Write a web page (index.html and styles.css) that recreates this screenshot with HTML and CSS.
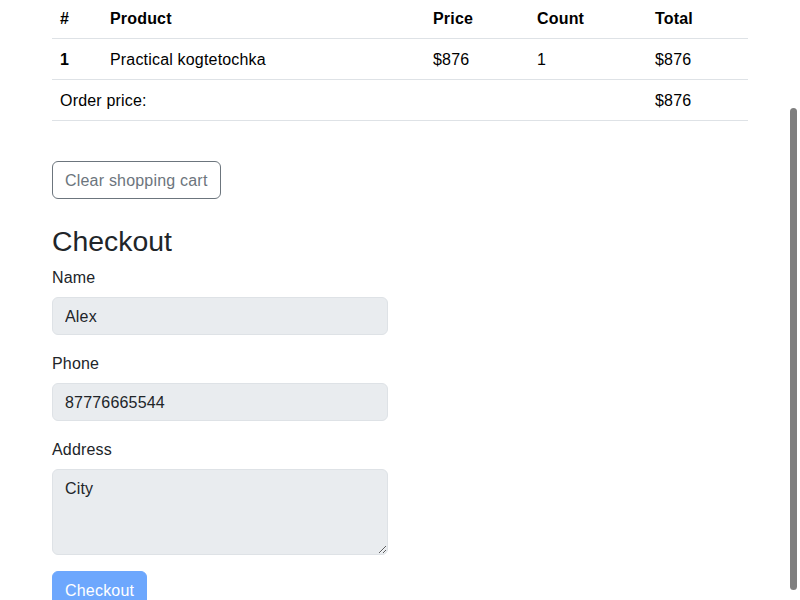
FILE: index.html
```html
<!DOCTYPE html>
<html lang="en">
<head>
<meta charset="utf-8">
<title>Cart</title>
<link rel="stylesheet" href="styles.css">
</head>
<body>
<div class="container">
  <table class="cart">
    <thead>
      <tr>
        <th class="c-num">#</th>
        <th class="c-prod">Product</th>
        <th class="c-price">Price</th>
        <th class="c-count">Count</th>
        <th class="c-total">Total</th>
      </tr>
    </thead>
    <tbody>
      <tr>
        <th>1</th>
        <td>Practical kogtetochka</td>
        <td>$876</td>
        <td>1</td>
        <td>$876</td>
      </tr>
      <tr>
        <td colspan="4">Order price:</td>
        <td>$876</td>
      </tr>
    </tbody>
  </table>

  <button class="btn btn-outline" type="button">Clear shopping cart</button>

  <h2 class="title">Checkout</h2>
  <form class="form">
    <div class="field">
      <label class="label" for="name">Name</label>
      <input class="control" id="name" type="text" value="Alex" readonly>
    </div>
    <div class="field">
      <label class="label" for="phone">Phone</label>
      <input class="control" id="phone" type="text" value="87776665544" readonly>
    </div>
    <div class="field">
      <label class="label" for="address">Address</label>
      <textarea class="control area" id="address" rows="3" readonly>City</textarea>
    </div>
    <button class="btn btn-primary" type="button" disabled>Checkout</button>
  </form>
</div>
<div class="scroll-thumb"></div>
</body>
</html>
```

FILE: styles.css
```css
* { box-sizing: border-box; }
html, body { margin: 0; padding: 0; background: #fff; }
body {
  font-family: "Liberation Sans", Arial, sans-serif;
  font-size: 16px;
  line-height: 24px;
  letter-spacing: 0.18px;
  color: #212529;
  overflow: hidden;
}
.container {
  width: 720px;
  margin: 0 auto;
  padding: 0 12px;
}
.cart {
  width: 696px;
  border-collapse: collapse;
  margin-bottom: 40px;
  color: #000;
}
.cart th, .cart td {
  padding: 9px 8px 7px;
  text-align: left;
  border-bottom: 1px solid #dee2e6;
  vertical-align: top;
}
.cart th { font-weight: 700; }
.cart td { font-weight: 400; }
.cart thead th { padding-top: 7px; padding-bottom: 7px; }
.c-num { width: 50px; }
.c-prod { width: 323px; }
.c-price { width: 104px; }
.c-count { width: 118px; }
.c-total { width: 101px; }

.btn {
  display: inline-block;
  font-family: inherit;
  font-size: 16px;
  line-height: 24px;
  letter-spacing: 0.2px;
  padding: 7px 12px 5px;
  border-radius: 6px;
  border: 1px solid transparent;
  background: transparent;
}
.btn-outline {
  color: #6c757d;
  border-color: #6c757d;
}
.title {
  font-size: 28.4px;
  font-weight: 500;
  line-height: 34px;
  letter-spacing: 0;
  margin: 24px 0 8px;
  padding-top: 1px;
  height: 34px;
  color: #212529;
}
.form { display: block; }
.field { margin-bottom: 16px; }
.label {
  display: block;
  margin-bottom: 8px;
  padding-top: 1px;
  height: 24px;
}
.control {
  display: block;
  width: 336px;
  height: 38px;
  padding: 7px 12px 5px;
  font-family: inherit;
  font-size: 16px;
  line-height: 24px;
  letter-spacing: 0.18px;
  color: #212529;
  background: #e9ecef;
  border: 1px solid #dee2e6;
  border-radius: 6px;
  outline: none;
}
.area {
  height: 86px;
  resize: vertical;
}
.btn-primary {
  color: #fff;
  background: #0d6efd;
  border-color: #0d6efd;
  opacity: 0.6;
}
.scroll-thumb {
  position: fixed;
  top: 108px;
  right: 3px;
  width: 7px;
  height: 482px;
  border-radius: 4px;
  background: #7f7f7f;
}
```
